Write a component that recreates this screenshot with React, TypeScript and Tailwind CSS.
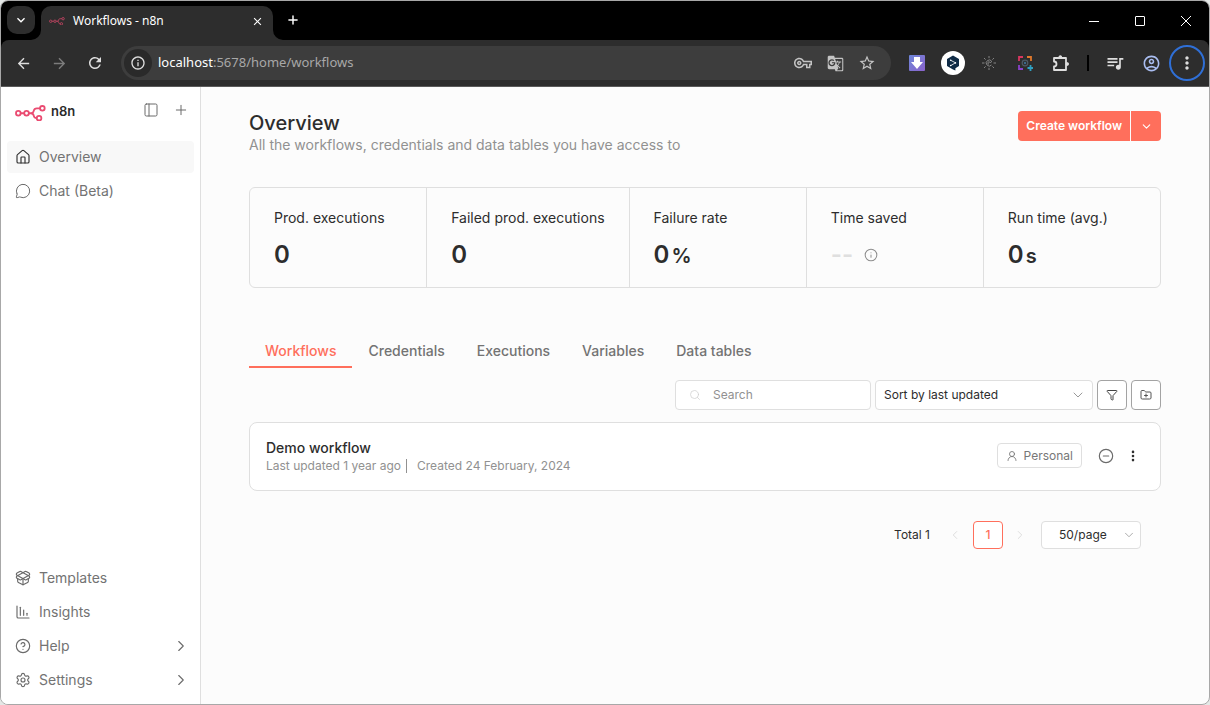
import type { ReactNode } from 'react'
import {
  ChartColumnDecreasing,
  ChevronDown,
  ChevronLeft,
  ChevronRight,
  CircleMinus,
  CircleQuestionMark,
  EllipsisVertical,
  FolderPlus,
  Funnel,
  House,
  Info,
  MessageCircle,
  PackageOpen,
  PanelLeft,
  Plus,
  Search,
  Settings,
  UserRound,
} from 'lucide-react'
import {
  MdArrowBack,
  MdArrowForward,
  MdClose,
  MdGTranslate,
  MdKeyboardArrowDown,
  MdMoreVert,
  MdOutlineAccountCircle,
  MdOutlineInfo,
  MdOutlineQueueMusic,
  MdOutlineVpnKey,
  MdRefresh,
  MdStarBorder,
} from 'react-icons/md'

const stats = [
  { label: 'Prod. executions', value: '0' },
  { label: 'Failed prod. executions', value: '0' },
  { label: 'Failure rate', value: '0', unit: '%' },
  { label: 'Time saved' },
  { label: 'Run time (avg.)', value: '0', unit: 's' },
]

const tabs = ['Workflows', 'Credentials', 'Executions', 'Variables', 'Data tables']

function Logo({ className }: { className?: string }) {
  return (
    <svg viewBox="44 50 94 50" fill="none" stroke="#ea4b71" strokeWidth="5.5" className={className}>
      <circle cx="54" cy="75" r="7" />
      <circle cx="79" cy="75" r="7" />
      <circle cx="127" cy="60" r="7" />
      <circle cx="117" cy="90" r="7" />
      <path d="M61 75h11M86 75h6c8 0 8-3 9-8s3-7 9-7h10M92 75c8 0 8 3 9 8s3 7 9 7" />
    </svg>
  )
}

function BarButton({ label, children }: { label: string; children: ReactNode }) {
  return (
    <button aria-label={label} className="flex size-9 shrink-0 items-center justify-center">
      {children}
    </button>
  )
}

function TitleBar() {
  return (
    <div className="flex h-[39px] shrink-0 items-end bg-black text-white">
      <button
        aria-label="Search tabs"
        className="mb-1.5 ml-1.5 flex size-7 items-center justify-center rounded-[10px] bg-[#2d2d2d]"
      >
        <MdKeyboardArrowDown size={16} />
      </button>

      <div className="relative ml-1.5 flex h-[34px] w-58 items-center rounded-t-[10px] bg-[#2d2d2d] px-2 pb-1">
        <svg viewBox="0 0 10 10" className="absolute bottom-0 -left-2.5 size-2.5" fill="#2d2d2d">
          <path d="M10 0v10H0A10 10 0 0 0 10 0z" />
        </svg>
        <svg viewBox="0 0 10 10" className="absolute -right-2.5 bottom-0 size-2.5" fill="#2d2d2d">
          <path d="M0 0v10h10A10 10 0 0 1 0 0z" />
        </svg>
        <Logo className="w-4 opacity-75" />
        <span className="ml-2 flex-1 font-[Noto_Sans,sans-serif] text-xs">Workflows - n8n</span>
        <button aria-label="Close tab" className="flex size-4 items-center justify-center">
          <MdClose size={13} />
        </button>
      </div>

      <button aria-label="New tab" className="mb-3 ml-3 flex size-4 items-center justify-center">
        <Plus size={14} strokeWidth={2.5} />
      </button>

      {/* Window controls */}
      <div className="ml-auto flex h-full items-center">
        <button aria-label="Minimize" className="flex h-full w-[46px] items-center justify-center">
          <svg viewBox="0 0 10 10" className="size-2.5" stroke="#fff">
            <path d="M0 5.5h10" />
          </svg>
        </button>
        <button aria-label="Maximize" className="flex h-full w-[46px] items-center justify-center">
          <svg viewBox="0 0 10 10" className="size-2.5" stroke="#fff" fill="none">
            <rect x=".5" y=".5" width="9" height="9" rx=".5" />
          </svg>
        </button>
        <button aria-label="Close" className="flex h-full w-[46px] items-center justify-center">
          <svg viewBox="0 0 10 10" className="size-2.5" stroke="#fff">
            <path d="M0 0l10 10M10 0L0 10" />
          </svg>
        </button>
      </div>
    </div>
  )
}

function AddressBar() {
  return (
    <div className="shrink-0 bg-black">
      <div className="flex h-[47px] items-center rounded-t-lg border-b border-[#5a5a5a] bg-[#2d2d2d] pr-1 pl-1 text-[#dedede]">
        <BarButton label="Back">
          <MdArrowBack size={17} />
        </BarButton>
        <BarButton label="Forward">
          <MdArrowForward size={17} className="text-[#7c7c7c]" />
        </BarButton>
        <BarButton label="Reload">
          <MdRefresh size={18} />
        </BarButton>

        <div className="ml-2 flex h-[34px] min-w-0 flex-1 items-center rounded-full bg-[#3d3d3d] pr-2 pl-[3px]">
          <button
            aria-label="Site information"
            className="flex size-7 items-center justify-center rounded-full bg-[#2a2a2a]"
          >
            <MdOutlineInfo size={16} />
          </button>
          <div className="ml-1.5 flex-1 font-[Noto_Sans,sans-serif] text-[13px] text-[#a8a8a8]">
            <span className="text-white">localhost</span>:5678/home/workflows
          </div>
          <div className="flex gap-3 text-[#c4c4c4]">
            <button aria-label="Passwords" className="flex size-5 items-center justify-center">
              <MdOutlineVpnKey size={18} />
            </button>
            <button aria-label="Translate" className="flex size-5 items-center justify-center">
              <MdGTranslate size={17} />
            </button>
            <button aria-label="Bookmark" className="mr-1.5 flex size-5 items-center justify-center">
              <MdStarBorder size={18} />
            </button>
          </div>
        </div>

        {/* Extensions */}
        <div className="ml-2 flex items-center">
          <BarButton label="Downloader">
            <svg viewBox="0 0 16 16" className="size-4">
              <defs>
                <linearGradient id="dl" x1="0" y1="0" x2="1" y2="1">
                  <stop offset="0" stopColor="#6d86d8" />
                  <stop offset="1" stopColor="#8b63cc" />
                </linearGradient>
              </defs>
              <rect width="16" height="16" rx="1" fill="url(#dl)" />
              <path d="M5 2h6v5h3l-6 7-6-7h3z" fill="#fff" />
            </svg>
          </BarButton>
          <BarButton label="DeepL">
            <svg viewBox="0 0 24 24" className="size-6">
              <circle cx="12" cy="12" r="12" fill="#fff" />
              <path d="M12 4.5l6 3.4v7.2l-3.6 2.1v2.3L12 18.5l-6-3.4V7.9z" fill="#0f2b46" />
              <path d="M9.7 9.3l4.8 2.5-4.8 2.8" fill="none" stroke="#fff" strokeWidth=".8" />
              <circle cx="9.7" cy="9.3" r=".8" fill="#fff" />
              <circle cx="14.4" cy="11.9" r=".8" fill="#fff" />
              <circle cx="9.7" cy="14.5" r=".8" fill="#fff" />
            </svg>
          </BarButton>
          <BarButton label="Brightness">
            <svg viewBox="0 0 16 16" className="size-4" fill="none" stroke="#858585" strokeWidth="1">
              <path d="M10.5 10a3 3 0 1 1 .3-3.6M8 9.2a1.2 1.2 0 1 1 1.2-1.4l1.8-1.4" />
              <path d="M8 1v2.2M8 12.8V15M1 8h2.5M12.5 8H15M3 3l1.6 1.6M11.4 11.4L13 13M3 13l1.6-1.6M11.4 4.6L13 3" />
            </svg>
          </BarButton>
          <BarButton label="Screen capture">
            <svg viewBox="0 0 16 16" className="size-4" fill="none" strokeWidth="1.8">
              <path d="M2 6V2h4" stroke="#d8365f" />
              <path d="M10 2h4v4" stroke="#e0792c" />
              <path d="M2 10v4h4" stroke="#8a42c9" />
              <path d="M13.5 10v6M10.5 13h5.5" stroke="#2f9fc0" />
              <circle cx="8" cy="8" r="2.8" stroke="#4c5a66" strokeWidth="1.2" />
              <circle cx="8" cy="8" r="1.2" fill="#3b6b8c" />
            </svg>
          </BarButton>
          <BarButton label="Extensions">
            <svg viewBox="0 0 18 18" className="size-[18px]" fill="none" stroke="#dedede" strokeWidth="1.8">
              <path
                d="M2 4h12v12H2v-3.5a2.4 2.4 0 0 0 0-5z"
                strokeLinejoin="round"
              />
              <path d="M6.5 3.5a1.8 1.8 0 0 1 3.6 0zM14.5 8.2a1.8 1.8 0 0 1 0 3.6z" fill="#dedede" stroke="none" />
              <circle cx="8.3" cy="3" r="1.7" fill="#dedede" stroke="none" />
              <circle cx="15.3" cy="10" r="1.7" fill="#dedede" stroke="none" />
            </svg>
          </BarButton>
          <span className="mx-2 h-4 w-0.5 bg-black" />
          <BarButton label="Media controls">
            <MdOutlineQueueMusic size={20} />
          </BarButton>
          <BarButton label="Profile">
            <MdOutlineAccountCircle size={19} className="text-[#a9bdf0]" />
          </BarButton>
          <button
            aria-label="Menu"
            className="flex size-9 items-center justify-center rounded-full border-2 border-[#2f6fd6]"
          >
            <MdMoreVert size={20} />
          </button>
        </div>
      </div>
    </div>
  )
}

function NavItem({
  icon,
  label,
  active,
  arrow,
}: {
  icon: ReactNode
  label: string
  active?: boolean
  arrow?: boolean
}) {
  return (
    <a
      href="#"
      className={
        active
          ? 'flex h-8 items-center gap-2 rounded bg-[#f8f8f8] px-2 text-[#333]'
          : 'flex h-8 items-center gap-2 rounded px-2 text-[#6b6b6b]'
      }
    >
      {icon}
      <span className="flex-1 text-sm text-[#737373]">{label}</span>
      {arrow && <ChevronRight size={18} strokeWidth={1.5} className="-mr-1" />}
    </a>
  )
}

function Sidebar() {
  return (
    <aside className="flex w-50 shrink-0 flex-col border-r border-[#dfdfdf] bg-white px-1.5 pb-2">
      <div className="flex h-[54px] items-center pb-2 pl-2">
        <Logo className="mt-1.5 w-[31px]" />
        <span className="mt-1 ml-[5px] text-[13px] font-semibold text-[#2b2b2b]">n8n</span>
        <button aria-label="Collapse sidebar" className="ml-auto text-[#6b6b6b]">
          <PanelLeft size={16} strokeWidth={1.5} />
        </button>
        <button aria-label="Add" className="mr-[5px] ml-3.5 text-[#6b6b6b]">
          <Plus size={16} strokeWidth={1.5} />
        </button>
      </div>

      <nav className="flex flex-1 flex-col gap-0.5">
        <NavItem icon={<House size={16} strokeWidth={1.75} />} label="Overview" active />
        <NavItem icon={<MessageCircle size={16} strokeWidth={1.5} />} label="Chat (Beta)" />
      </nav>

      <nav className="flex flex-col gap-0.5">
        <NavItem icon={<PackageOpen size={16} strokeWidth={1.75} />} label="Templates" />
        <NavItem icon={<ChartColumnDecreasing size={16} strokeWidth={1.75} />} label="Insights" />
        <NavItem icon={<CircleQuestionMark size={16} strokeWidth={1.75} />} label="Help" arrow />
        <NavItem icon={<Settings size={16} strokeWidth={1.75} />} label="Settings" arrow />
      </nav>
    </aside>
  )
}

function Stats() {
  return (
    <div className="mt-8 flex rounded-md border border-[#dfdfdf] text-[#2d2d2d]">
      {stats.map((s) => (
        <div
          key={s.label}
          className="flex-1 border-r border-[#dfdfdf] px-6 pt-5 pb-[17px] whitespace-nowrap last:border-r-0"
        >
          <div className="text-sm leading-5">{s.label}</div>
          <div className="mt-3 flex h-[30px] items-center">
            {s.value ? (
              <div className="flex items-baseline gap-0.5 font-semibold">
                <span className="text-2xl leading-[30px]">{s.value}</span>
                {s.unit && <span className="text-xl leading-[30px]">{s.unit}</span>}
              </div>
            ) : (
              <>
                <span className="text-2xl leading-[30px] font-semibold text-[#dfdfdf]">--</span>
                <Info size={14} strokeWidth={1.75} className="ml-[11px] text-[#8d8d8d]" />
              </>
            )}
          </div>
        </div>
      ))}
    </div>
  )
}

function Filters() {
  return (
    <div className="mt-3 flex justify-end gap-1">
      <label className="flex h-[30px] w-49 items-center rounded border border-[#dfdfdf] bg-white pr-2 pl-[13px]">
        <Search size={12} strokeWidth={1.5} className="shrink-0 text-[#cfcfcf]" />
        <input
          type="text"
          aria-label="Search"
          placeholder="Search"
          className="ml-3 w-full min-w-0 text-xs outline-none placeholder:text-[#919191]"
        />
      </label>
      <div className="relative">
        <select
          aria-label="Sort"
          className="h-[30px] w-[218px] appearance-none rounded border border-[#dfdfdf] bg-white px-2 text-xs text-[#2d2d2d]"
        >
          <option>Sort by last updated</option>
        </select>
        <ChevronDown
          size={16}
          strokeWidth={1.5}
          className="pointer-events-none absolute top-[7px] right-[7px] text-[#999]"
        />
      </div>
      <button
        aria-label="Filter"
        className="flex size-[30px] items-center justify-center rounded border border-[#a3a3a3] bg-white text-[#444]"
      >
        <Funnel size={12} />
      </button>
      <button
        aria-label="Add folder"
        className="flex size-[30px] items-center justify-center rounded border border-[#a3a3a3] bg-white text-[#555]"
      >
        <FolderPlus size={12} />
      </button>
    </div>
  )
}

function WorkflowCard() {
  return (
    <div className="mt-3 flex h-[69px] items-center rounded-lg border border-[#dfdfdf] bg-white px-4 pb-0.5">
      <div className="flex-1">
        <h2 className="text-sm leading-5 font-medium text-[#2d2d2d]">Demo workflow</h2>
        <div className="flex items-center text-xs leading-4 text-[#919191]">
          <span>Last updated 1 year ago</span>
          <span className="mr-2.5 ml-[5px] h-3.5 w-px bg-[#919191]" />
          <span>Created 24 February, 2024</span>
        </div>
      </div>
      <span className="flex h-[25px] items-center gap-1.5 rounded border border-[#dfdfdf] px-2 text-xs text-[#777]">
        <UserRound size={12} strokeWidth={1.75} />
        Personal
      </span>
      <CircleMinus size={16} strokeWidth={1.75} className="ml-4 text-[#6b6b6b]" />
      <button aria-label="Workflow actions" className="mr-[3px] ml-[11px] flex w-4 justify-center text-[#2d2d2d]">
        <EllipsisVertical size={14} strokeWidth={2.5} />
      </button>
    </div>
  )
}

function Pagination() {
  return (
    <div className="mt-[30px] flex items-center justify-end pr-5 text-xs text-[#2d2d2d]">
      <span>Total 1</span>
      <button aria-label="Previous page" className="ml-[18px] text-[#d8d8d8]">
        <ChevronLeft size={14} strokeWidth={1.5} />
      </button>
      <button className="mr-2.5 ml-[11px] h-7 w-[30px] rounded border border-[#ff6f5c] bg-white font-medium text-[#ff6f5c]">
        1
      </button>
      <button aria-label="Next page" className="text-[#d8d8d8]">
        <ChevronRight size={14} strokeWidth={1.5} />
      </button>
      <div className="relative ml-3.5">
        <select
          aria-label="Page size"
          className="h-7 w-25 appearance-none rounded border border-[#dfdfdf] bg-white pl-[17px] text-xs"
        >
          <option>50/page</option>
        </select>
        <ChevronDown
          size={14}
          strokeWidth={1.5}
          className="pointer-events-none absolute top-[7px] right-[5px] text-[#a0a0a0]"
        />
      </div>
    </div>
  )
}

export default function App() {
  return (
    <div className="h-screen bg-[#e4e8e6] font-[Inter,sans-serif]">
      <div className="flex h-full flex-col overflow-hidden rounded-lg border border-[#a8a8a8] bg-[#fcfcfc]">
        <TitleBar />
        <AddressBar />
        <div className="flex min-h-0 flex-1">
          <Sidebar />
          <main className="min-w-0 flex-1 px-12 pt-6">
            <header className="flex items-start justify-between">
              <div>
                <h1 className="text-xl leading-6 font-medium text-[#2d2d2d]">Overview</h1>
                <p className="text-sm leading-5 text-[#919191]">
                  All the workflows, credentials and data tables you have access to
                </p>
              </div>
              <div className="flex gap-px text-white">
                <button className="h-[30px] rounded-l bg-[#ff6f5c] px-2 text-xs font-semibold">
                  Create workflow
                </button>
                <button
                  aria-label="More create options"
                  className="flex size-[30px] items-center justify-center rounded-r bg-[#ff6f5c]"
                >
                  <ChevronDown size={13} />
                </button>
              </div>
            </header>

            <Stats />

            <nav className="mt-[53px] flex text-sm leading-5 font-medium text-[#737373]">
              {tabs.map((tab, i) => (
                <a
                  key={tab}
                  href="#"
                  className={
                    i === 0
                      ? 'border-b-2 border-[#ff6f5c] px-4 pb-[5px] text-[#ff6f5c]'
                      : 'border-b-2 border-transparent px-4 pb-[5px]'
                  }
                >
                  {tab}
                </a>
              ))}
            </nav>

            <Filters />
            <WorkflowCard />
            <Pagination />
          </main>
        </div>
      </div>
    </div>
  )
}
